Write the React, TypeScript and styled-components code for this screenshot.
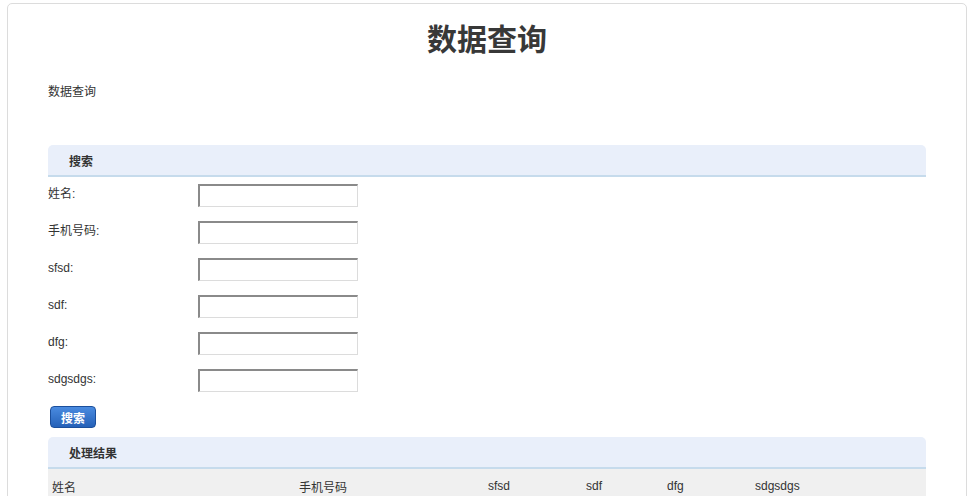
import React from 'react';
import styled, { createGlobalStyle } from 'styled-components';

const GlobalStyle = createGlobalStyle`
  html, body {
    margin: 0;
    padding: 0;
    background: #fff;
  }
  body {
    padding: 3px 0 0 7px;
    font-family: "Liberation Sans", "Noto Sans CJK SC", sans-serif;
    font-size: 12px;
    color: #333;
  }
`;

const Card = styled.div`
  width: 878px;
  padding: 0 40px 0 40px;
  border: 1px solid #dcdcdc;
  border-radius: 5px;
  min-height: 520px;
  box-sizing: content-box;
`;

const Title = styled.h1`
  margin: 18px 0 0 0;
  font-size: 30px;
  line-height: 30px;
  font-weight: bold;
  text-align: center;
  color: #383838;
  font-family: "Noto Sans CJK SC", sans-serif;
`;

const Crumb = styled.div`
  margin-top: 30px;
  line-height: 18px;
  font-family: "Noto Sans CJK SC", sans-serif;
`;

const PanelHead = styled.div<{ $top: number }>`
  margin-top: ${(p) => p.$top}px;
  height: 30px;
  display: flex;
  align-items: center;
  padding-left: 21px;
  background: #e9effa;
  border-radius: 5px 5px 0 0;
  border-bottom: 2px solid #c6dbec;
  font-weight: bold;
  font-family: "Noto Sans CJK SC", sans-serif;
`;

const Form = styled.div`
  display: flex;
  flex-direction: column;
  gap: 14px;
  padding-top: 7px;
`;

const Row = styled.div`
  display: flex;
  align-items: flex-start;
`;

const Label = styled.label`
  width: 150px;
  padding-top: 2px;
  line-height: 16px;
`;

const Input = styled.input`
  width: 160px;
  height: 23px;
  box-sizing: border-box;
  margin: 0;
  border: 1px solid;
  border-width: 2px 1px 1px 2px;
  border-color: #8a8a8a #dcdcdc #dcdcdc #8a8a8a;
  background: #fff;
`;

const Button = styled.button`
  margin: 14px 0 0 2px;
  width: 46px;
  height: 22px;
  padding: 0;
  border: 1px solid #1b4f9c;
  border-radius: 4px;
  background: linear-gradient(#4a8be0, #2561b8);
  color: #fff;
  font-weight: bold;
  font-size: 12px;
  font-family: "Noto Sans CJK SC", sans-serif;
`;

const Table = styled.table`
  width: 100%;
  border-collapse: collapse;
  table-layout: fixed;
`;

const Th = styled.th<{ $w: number }>`
  width: ${(p) => p.$w}px;
  height: 30px;
  padding: 2px 0 0 4px;
  text-align: left;
  font-weight: normal;
  background: #f0f0f0;
`;

const fields = ['姓名', '手机号码', 'sfsd', 'sdf', 'dfg', 'sdgsdgs'];
const widths = [243, 185, 94, 77, 84, 171];

export default function App() {
  return (
    <>
      <GlobalStyle />
      <Card>
        <Title>数据查询</Title>
        <Crumb>数据查询</Crumb>
        <PanelHead $top={45}>搜索</PanelHead>
        <Form>
          {fields.map((f) => (
            <Row key={f}>
              <Label>{f}:</Label>
              <Input type="text" />
            </Row>
          ))}
        </Form>
        <Button>搜索</Button>
        <PanelHead $top={9}>处理结果</PanelHead>
        <Table>
          <thead>
            <tr>
              {fields.map((f, i) => (
                <Th key={f} $w={widths[i]}>
                  {f}
                </Th>
              ))}
            </tr>
          </thead>
        </Table>
      </Card>
    </>
  );
}
